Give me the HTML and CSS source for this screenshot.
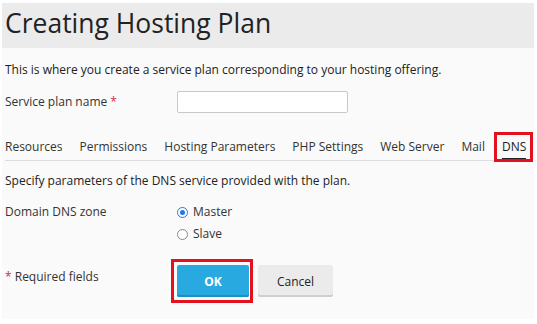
FILE: index.html
```html
<!DOCTYPE html>
<html>
<head>
<meta charset="utf-8">
<link rel="stylesheet" href="styles.css">
</head>
<body>
<div class="panel">
  <div class="header"><h1 class="title">Creating Hosting Plan</h1></div>
  <div class="content">
    <p class="intro">This is where you create a service plan corresponding to your hosting offering.</p>
    <div class="field-row">
      <label class="label">Service plan name <span class="req">*</span></label>
      <input class="text-input" type="text">
    </div>
    <nav class="tabs">
      <span class="tab">Resources</span>
      <span class="tab">Permissions</span>
      <span class="tab">Hosting Parameters</span>
      <span class="tab">PHP Settings</span>
      <span class="tab">Web Server</span>
      <span class="tab">Mail</span>
      <span class="tab tab-active">DNS</span>
    </nav>
    <p class="desc">Specify parameters of the DNS service provided with the plan.</p>
    <div class="radio-row">
      <div class="label">Domain DNS zone</div>
      <div class="radios">
        <label class="radio"><span class="dot dot-on"></span>Master</label>
        <label class="radio"><span class="dot"></span>Slave</label>
      </div>
    </div>
    <div class="actions">
      <div class="label req-note"><span class="req">*</span> Required fields</div>
      <div class="buttons">
        <button class="btn btn-ok">OK</button>
        <button class="btn btn-cancel">Cancel</button>
      </div>
    </div>
  </div>
</div>
</body>
</html>
```
FILE: styles.css
```css
html, body {
  margin: 0;
  padding: 0;
  background: #ffffff;
}
body {
  font-family: "Open Sans", "Liberation Sans", sans-serif;
  color: #222;
  font-size: 12px;
  line-height: 16px;
}
.panel {
  margin: 3px 3px 0 2px;
  height: 316px;
  background: #fafafa;
}
.header {
  background: #ebebeb;
  height: 45px;
}
.title {
  margin: 0;
  padding: 4px 0 0 3px;
  font-size: 26.5px;
  line-height: 32px;
  font-weight: 400;
  color: #222;
}
.content {
  padding: 0 3px;
}
.intro {
  margin: 14px 0 0;
}
.field-row {
  display: flex;
  align-items: center;
  margin-top: 13px;
}
.label {
  width: 172px;
  flex: none;
  color: #333;
}
.req {
  color: #d02c4b;
}
.text-input {
  width: 171px;
  height: 22px;
  box-sizing: border-box;
  border: 1px solid #c8c8c8;
  border-radius: 2px;
  background: #fff;
  margin: 0;
  padding: 0 4px;
}
.tabs {
  display: flex;
  gap: 17px;
  margin-top: 26px;
  border-bottom: 1px solid #dddddd;
  padding-left: 0;
}
.tab {
  padding-bottom: 3px;
  border-bottom: 2px solid transparent;
  color: #333;
  white-space: nowrap;
}
.tab-active {
  position: relative;
  border-bottom-color: #222;
  color: #222;
}
.tab-active::after {
  content: "";
  position: absolute;
  left: -8px;
  right: -7px;
  top: -7px;
  bottom: -4px;
  border: 3px solid #e3101e;
}
.desc {
  margin: 12px 0 0;
}
.radio-row {
  display: flex;
  margin-top: 15px;
}
.radios {
  display: flex;
  flex-direction: column;
  gap: 6px;
}
.radio {
  display: flex;
  align-items: center;
  gap: 5px;
  color: #333;
}
.dot {
  width: 11px;
  height: 11px;
  box-sizing: border-box;
  border: 1px solid #8a8a8a;
  border-radius: 50%;
  background: #fff;
  position: relative;
}
.dot-on {
  border-color: #1e78e6;
}
.dot-on::after {
  content: "";
  position: absolute;
  left: 2px;
  top: 2px;
  width: 5px;
  height: 5px;
  border-radius: 50%;
  background: #1e78e6;
}
.actions {
  display: flex;
  margin-top: 23px;
}
.req-note {
  padding-top: 4px;
}
.buttons {
  display: flex;
  gap: 9px;
}
.btn {
  height: 32px;
  box-sizing: border-box;
  border: 0;
  border-radius: 2px;
  font-family: "Open Sans", "Liberation Sans", sans-serif;
  font-size: 12px;
  padding: 0;
  margin: 0;
}
.btn-ok {
  width: 72px;
  background: #28aae1;
  color: #fff;
  font-weight: 700;
  box-shadow: inset 0 -2px 0 #1f8fc0;
  position: relative;
}
.btn-ok::after {
  content: "";
  position: absolute;
  left: -6px;
  right: -4px;
  top: -6px;
  bottom: -6px;
  border: 3px solid #e3101e;
}
.btn-cancel {
  width: 75px;
  background: #ebebeb;
  color: #222;
  box-shadow: inset 0 -2px 0 #cfcfcf;
}
```
